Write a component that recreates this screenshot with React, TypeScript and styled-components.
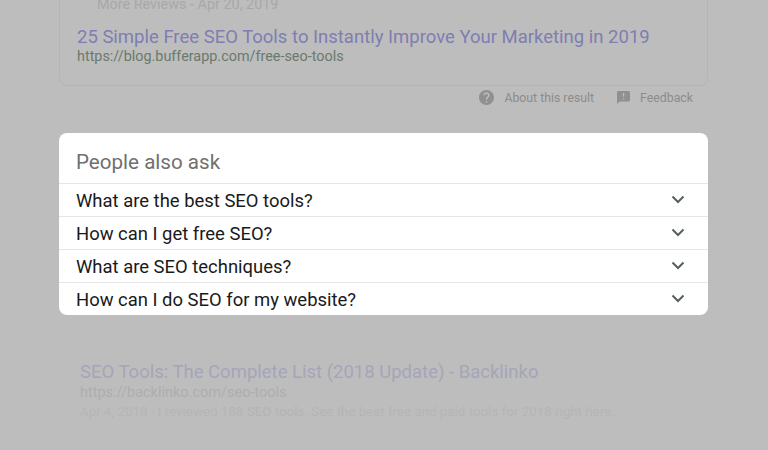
import { createGlobalStyle, styled } from 'styled-components'

const questions = [
  'What are the best SEO tools?',
  'How can I get free SEO?',
  'What are SEO techniques?',
  'How can I do SEO for my website?',
]

const Global = createGlobalStyle`
  html, body {
    margin: 0;
    padding: 0;
    background: #bdbdbd;
    font-family: Roboto, "Liberation Sans", sans-serif;
  }
`

const Page = styled.div`
  width: 768px;
  height: 450px;
  overflow: hidden;
  background: #bdbdbd;
`

const Column = styled.div`
  width: 649px;
  margin-left: 59px;
`

const ResultCard = styled.div`
  box-sizing: border-box;
  height: 86px;
  padding: 0 17px;
  border: 1px solid #b5b5b5;
  border-top: 0;
  border-radius: 0 0 8px 8px;
  overflow: hidden;
  display: flex;
  flex-direction: column;
  justify-content: flex-end;
`

const Meta = styled.div`
  font-size: 14.4px;
  line-height: 16px;
  color: #a8a8a8;
  margin: 0 0 12px 20px;
  white-space: nowrap;
`

const ResultTitle = styled.div`
  font-size: 18.5px;
  line-height: 24px;
  color: #7e7eb2;
  white-space: nowrap;
`

const ResultUrl = styled.div`
  font-size: 14.4px;
  line-height: 18px;
  color: #6a7a6c;
  margin-bottom: 19px;
  margin-top: -1px;
`

const Footer = styled.div`
  display: flex;
  justify-content: flex-end;
  align-items: center;
  height: 23px;
  padding-right: 15px;
`

const FooterLink = styled.div<{ $gap: number; $left?: number }>`
  display: flex;
  align-items: center;
  gap: ${(p) => p.$gap}px;
  margin-left: ${(p) => p.$left ?? 0}px;
  font-size: 12.3px;
  color: #8c8c8c;
`

const AskCard = styled.div`
  margin-top: 24px;
  background: #fff;
  border-radius: 8px;
  overflow: hidden;
`

const AskHeading = styled.div`
  height: 50px;
  box-sizing: border-box;
  padding: 17px 17px 0;
  font-size: 20.6px;
  line-height: 24px;
  color: #707070;
`

const Row = styled.div`
  box-sizing: border-box;
  height: 33px;
  padding: 2px 23px 0 17px;
  border-top: 1px solid #e6e6e6;
  display: flex;
  align-items: center;
  justify-content: space-between;
  font-size: 18.45px;
  color: #1a1a1a;
`

const ChevronWrap = styled.span`
  display: flex;
  margin-top: -3px;
`

const Faded = styled.div`
  margin: 45px 0 0 21px;
`

const FadedTitle = styled.div`
  font-size: 18.5px;
  line-height: 24px;
  color: #a5a5b8;
`

const FadedUrl = styled.div`
  font-size: 14.5px;
  line-height: 18px;
  color: #aeaeae;
`

const FadedSnippet = styled.div`
  margin-top: 2px;
  font-size: 13.35px;
  line-height: 16px;
  color: #b5b5b5;
  white-space: nowrap;

  b {
    font-weight: 500;
  }
`

const Chevron = () => (
  <svg width="14" height="9" viewBox="0 0 14 9">
    <path d="M1.5 1.5 7 7l5.5-5.5" fill="none" stroke="#56605a" strokeWidth="2" />
  </svg>
)

const HelpIcon = () => (
  <svg width="15" height="15" viewBox="2 2 20 20">
    <path
      fill="#909090"
      d="M12 2C6.48 2 2 6.48 2 12s4.48 10 10 10 10-4.48 10-10S17.52 2 12 2zm1 17h-2v-2h2v2zm2.07-7.75-.9.92C13.45 12.9 13 13.5 13 15h-2v-.5c0-1.1.45-2.1 1.17-2.83l1.24-1.26c.37-.36.59-.86.59-1.41 0-1.1-.9-2-2-2s-2 .9-2 2H8c0-2.21 1.79-4 4-4s4 1.79 4 4c0 .88-.36 1.68-.93 2.25z"
    />
  </svg>
)

const FeedbackIcon = () => (
  <svg width="13" height="13" viewBox="2 2 20 20">
    <path
      fill="#909090"
      d="M20 2H4c-1.1 0-2 .9-2 2v18l4-4h14c1.1 0 2-.9 2-2V4c0-1.1-.9-2-2-2zm-7 9h-2V5h2v6zm0 4h-2v-2h2v2z"
    />
  </svg>
)

export default function App() {
  return (
    <Page>
      <Global />
      <Column>
        <ResultCard>
          <Meta>More Reviews - Apr 20, 2019</Meta>
          <ResultTitle>25 Simple Free SEO Tools to Instantly Improve Your Marketing in 2019</ResultTitle>
          <ResultUrl>https://blog.bufferapp.com/free-seo-tools</ResultUrl>
        </ResultCard>
        <Footer>
          <FooterLink $gap={10}>
            <HelpIcon />
            About this result
          </FooterLink>
          <FooterLink $gap={10} $left={23}>
            <FeedbackIcon />
            Feedback
          </FooterLink>
        </Footer>
        <AskCard>
          <AskHeading>People also ask</AskHeading>
          {questions.map((q) => (
            <Row key={q}>
              {q}
              <ChevronWrap>
                <Chevron />
              </ChevronWrap>
            </Row>
          ))}
        </AskCard>
        <Faded>
          <FadedTitle>SEO Tools: The Complete List (2018 Update) - Backlinko</FadedTitle>
          <FadedUrl>https://backlinko.com/seo-tools</FadedUrl>
          <FadedSnippet>
            Apr 4, 2018 - I reviewed 188 <b>SEO tools</b>. See the best free and paid tools for 2018 right here.
          </FadedSnippet>
        </Faded>
      </Column>
    </Page>
  )
}
